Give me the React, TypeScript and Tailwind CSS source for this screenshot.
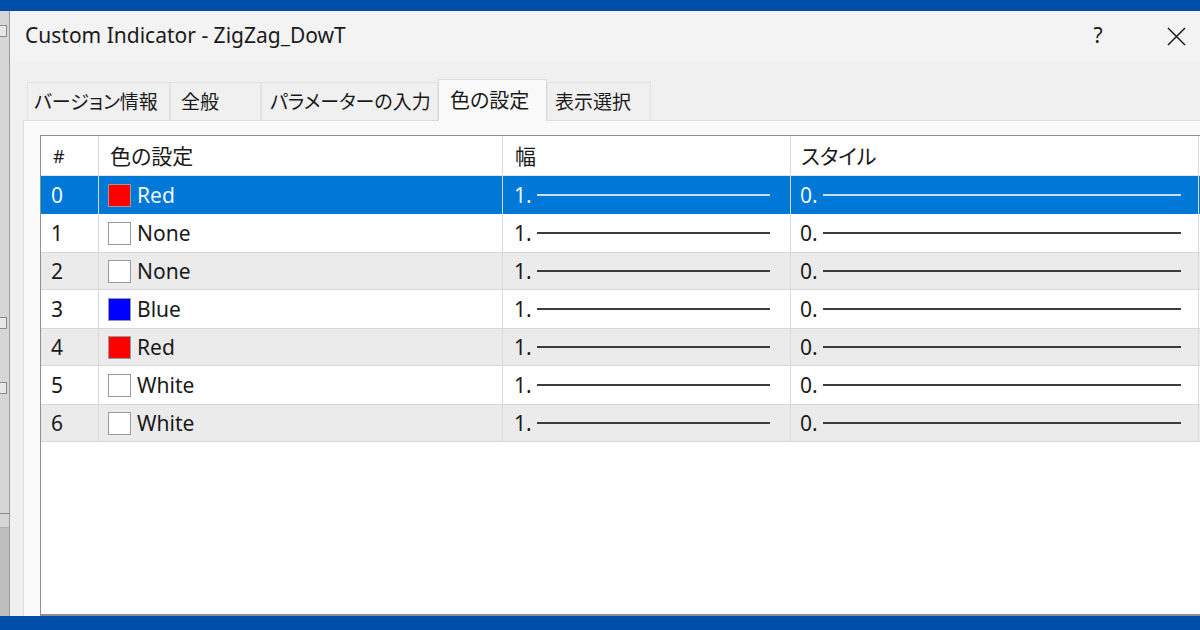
import type { ReactNode } from "react";

const rows = [
  { n: 0, color: "#ff0000", name: "Red" },
  { n: 1, color: "#ffffff", name: "None" },
  { n: 2, color: "#ffffff", name: "None" },
  { n: 3, color: "#0000ff", name: "Blue" },
  { n: 4, color: "#ff0000", name: "Red" },
  { n: 5, color: "#ffffff", name: "White" },
  { n: 6, color: "#ffffff", name: "White" },
];

const tabs = [
  { label: "バージョン情報", cls: "w-[143px] pl-[6px]" },
  { label: "全般", cls: "w-[91px] pl-[10px]" },
  { label: "パラメーターの入力", cls: "w-[177px] pl-[8px]" },
  { label: "色の設定", cls: "w-[109px] pl-[11px]" },
  { label: "表示選択", cls: "w-[104px] pl-[7px]" },
];

function Cell({ w, children }: { w: string; children: ReactNode }) {
  return (
    <div className={`${w} h-full flex items-center shrink-0 border-r border-[#d9d9d9] pt-[2px]`}>
      {children}
    </div>
  );
}

export default function App() {
  return (
    <div
      className="w-[1200px] h-[630px] flex flex-col overflow-hidden text-[#1a1a1a]"
      style={{ fontFamily: "'Noto Sans', 'Noto Sans CJK JP', sans-serif" }}
    >
      {/* top bar */}
      <div className="h-[11px] bg-[#004ea8] shrink-0" />

      <div className="flex-1 flex min-h-0">
        {/* window behind, left edge */}
        <div className="w-[10px] shrink-0 flex flex-col bg-[#d6d6d6] border-r border-[#9a9a9a]">
          <div className="h-[14px]" />
          <div className="w-[7px] h-[12px] border border-[#8a8a8a] border-l-0 bg-[#e6e6e6]" />
          <div className="h-[280px]" />
          <div className="w-[7px] h-[12px] border border-[#8a8a8a] border-l-0 bg-[#e6e6e6]" />
          <div className="h-[53px]" />
          <div className="w-[7px] h-[12px] border border-[#8a8a8a] border-l-0 bg-[#e6e6e6]" />
          <div className="h-[120px] border-b border-[#8a8a8a]" />
          <div className="h-[14px] border-b border-[#b0b0b0]" />
          <div className="flex-1 bg-[#bdbdbd]" />
        </div>

        {/* dialog */}
        <div className="flex-1 flex flex-col bg-[#f0f0f0]">
          <div className="h-[51px] shrink-0 flex items-center pl-[15px] pr-[12px] bg-[#f3f3f3]">
            <span className="text-[21px] leading-none -mt-[2px]">Custom Indicator - ZigZag_DowT</span>
            <span className="ml-auto text-[21px] w-[20px] text-center -mt-[2px]">?</span>
            <span className="ml-[56px] w-[24px] flex items-center justify-center -mt-[1px]">
              <svg width="19" height="19" viewBox="0 0 19 19">
                <path d="M1 1 L18 18 M18 1 L1 18" stroke="#1a1a1a" strokeWidth="1.5" />
              </svg>
            </span>
          </div>

          <div className="flex-1 flex flex-col pl-[13px]">
            <div className="h-[20px]" />
            {/* tabs */}
            <div className="flex items-end pl-[4px] h-[38px] shrink-0 [font-feature-settings:'palt']">
              {tabs.map((t, i) =>
                i === 3 ? (
                  <div
                    key={t.label}
                    className={`${t.cls} h-[42px] -mb-[1px] relative z-10 bg-[#f9f9f9] border border-b-0 border-[#dcdcdc] flex items-center whitespace-nowrap text-[20px]`}
                  >
                    {t.label}
                  </div>
                ) : (
                  <div
                    key={t.label}
                    className={`${t.cls} h-[38px] bg-[#f0f0f0] border border-b-0 border-[#e2e2e2] flex items-center whitespace-nowrap text-[19px] pt-[2px]`}
                  >
                    {t.label}
                  </div>
                )
              )}
            </div>

            {/* tab panel */}
            <div className="flex-1 bg-[#f9f9f9] border-t border-l border-[#dcdcdc] pl-[16px] pt-[14px]">
              <div className="h-full bg-white border-l border-t border-b-2 border-[#8c8f96] flex flex-col text-[21px]">
                {/* header */}
                <div className="h-[40px] flex shrink-0 border-b border-[#e3e3e3] [font-feature-settings:'palt']">
                  <Cell w="w-[58px]">
                    <span className="pl-[12px] text-[18px]">#</span>
                  </Cell>
                  <Cell w="w-[404px]">
                    <span className="pl-[11px]">色の設定</span>
                  </Cell>
                  <Cell w="w-[288px]">
                    <span className="pl-[12px]">幅</span>
                  </Cell>
                  <div className="flex-1 h-full flex items-center border-r border-[#d9d9d9] mr-[1px] pt-[2px]">
                    <span className="pl-[10px]">スタイル</span>
                  </div>
                </div>

                {rows.map((r, i) => {
                  const sel = i === 0;
                  const gray = i % 2 === 0 && !sel;
                  const bg = sel
                    ? "bg-[#0078d7] text-[#eef5fc]"
                    : gray
                      ? "bg-[#ebebeb] border-y border-[#d6d6d6]"
                      : "bg-white";
                  const line = sel ? "bg-[#c9def4]" : "bg-[#3c3c3c]";
                  return (
                    <div key={r.n} className={`h-[38px] flex shrink-0 ${bg}`}>
                      <Cell w="w-[58px]">
                        <span className="pl-[10px]">{r.n}</span>
                      </Cell>
                      <Cell w="w-[404px]">
                        <span
                          className="ml-[9px] w-[23px] h-[23px] border border-[#9a9a9a] shrink-0 -mt-[2px]"
                          style={{ background: r.color }}
                        />
                        <span className="ml-[6px]">{r.name}</span>
                      </Cell>
                      <Cell w="w-[288px]">
                        <span className="pl-[11px]">1.</span>
                        <span className={`ml-[5px] w-[233px] h-[2px] -mt-[2px] ${line}`} />
                      </Cell>
                      <div className="flex-1 h-full flex items-center border-r border-[#d9d9d9] mr-[1px] pt-[2px]">
                        <span className="pl-[9px]">0.</span>
                        <span className={`ml-[5px] w-[358px] h-[2px] -mt-[2px] ${line}`} />
                      </div>
                    </div>
                  );
                })}
                <div className="flex-1" />
              </div>
            </div>
          </div>
        </div>
      </div>

      {/* bottom bar */}
      <div className="h-[14px] bg-[#004ea8] shrink-0" />
    </div>
  );
}
